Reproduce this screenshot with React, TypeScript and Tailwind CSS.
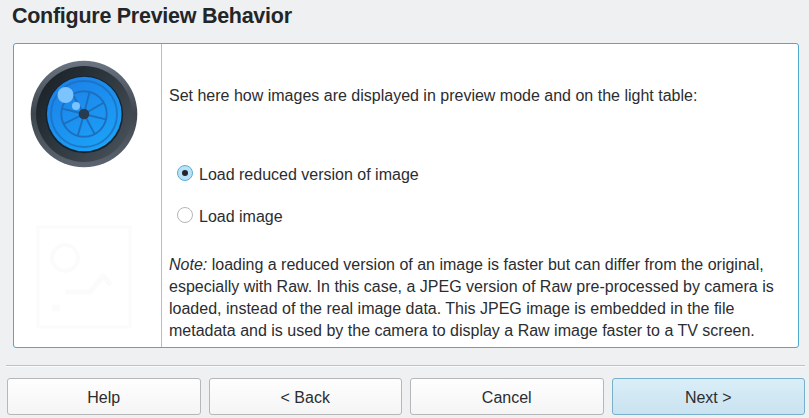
import React from "react";

function Lens() {
  return (
    <svg width="108" height="108" viewBox="0 0 108 108" className="block">
      <defs>
        <linearGradient id="rim" x1="0" y1="0" x2="0" y2="1">
          <stop offset="0" stopColor="#6b7583" />
          <stop offset="0.5" stopColor="#3f464e" />
          <stop offset="1" stopColor="#5c6570" />
        </linearGradient>
        <linearGradient id="barrel" x1="0" y1="0.1" x2="1" y2="0.9">
          <stop offset="0.1" stopColor="#1d252b" />
          <stop offset="0.5" stopColor="#303840" />
          <stop offset="1" stopColor="#4a525b" />
        </linearGradient>
        <linearGradient id="glass" x1="0.2" y1="0" x2="0.8" y2="1">
          <stop offset="0" stopColor="#1c7fe8" />
          <stop offset="1" stopColor="#1ba4f8" />
        </linearGradient>
      </defs>
      <circle cx="54" cy="54" r="53.3" fill="url(#rim)" />
      <circle cx="54" cy="54" r="48" fill="url(#barrel)" />
      <circle cx="54.3" cy="54.5" r="38.8" fill="#14242f" />
      <circle cx="54.3" cy="54" r="37.3" fill="url(#glass)" />
      <g fill="none" stroke="#1d6fbe" strokeWidth="1.9">
        <circle cx="54" cy="54" r="33" strokeOpacity="0.8" />
        <circle cx="54" cy="54" r="22.7" />
        {[14, 60, 104, 152, 196, 244, 284, 330].map((a) => (
          <path key={a} d="M54 50V31.5" transform={`rotate(${a} 54 54)`} />
        ))}
      </g>
      <circle cx="54" cy="54" r="5.3" fill="#263c52" />
      <circle cx="35.5" cy="35" r="8" fill="#7cc4ff" />
      <circle cx="46" cy="46" r="4" fill="#7cc4ff" />
    </svg>
  );
}

function FaintPicture() {
  return (
    <svg width="97" height="106" viewBox="0 0 97 106" fill="none" stroke="#fbfbfb" className="mt-[57px] ml-[6px] block">
      <path d="M2 2H94V102H2Z" strokeWidth="3" />
      <circle cx="29" cy="33" r="13" strokeWidth="4" />
      <path d="M29 67H54L67 51L75 60" strokeWidth="5" />
      <path d="M16 83H24" strokeWidth="7" />
    </svg>
  );
}

function Radio({ label, checked = false }: { label: string; checked?: boolean }) {
  return (
    <div className="flex h-[22px] items-center" role="radio" aria-checked={checked}>
      <span
        className={
          checked
            ? "mr-[6px] mb-1 flex size-4 items-center justify-center rounded-full border border-[#5aaed6] bg-[#b9e2f6]"
            : "mr-[6px] mb-1 flex size-4 items-center justify-center rounded-full border border-[#b4b6b8] bg-white"
        }
      >
        {checked && <span className="size-[6px] rounded-full bg-[#20262b]" />}
      </span>
      <span className="whitespace-nowrap">{label}</span>
    </div>
  );
}

function Button({ label, primary = false }: { label: string; primary?: boolean }) {
  return (
    <button
      className={
        primary
          ? "h-[37px] flex-1 rounded-[3px] border border-[#78afcb] bg-linear-to-b from-[#d9eef8] to-[#cae3f0] pt-0.5"
          : "h-[37px] flex-1 rounded-[3px] border border-[#b5b7b9] bg-linear-to-b from-[#fefefe] to-[#f5f5f6] pt-0.5"
      }
    >
      {label}
    </button>
  );
}

export default function App() {
  return (
    <div className="flex h-[418px] w-[809px] flex-col overflow-hidden bg-[#eff0f1] font-['Liberation_Sans',Arial,sans-serif] text-[16px] leading-[22px] text-[#2b2d30]">
      <h1 className="ml-3 h-[43px] pt-1 text-[21.5px] leading-[25px] font-bold tracking-[-0.27px] text-[#232629]">
        Configure Preview Behavior
      </h1>
      <main className="ml-[13px] flex h-[305px] w-[786px] rounded-[3px] border border-[#4fa9cc] bg-white">
        <aside className="w-[148px] shrink-0 border-r border-[#bcbec0] pt-4 pl-4">
          <Lens />
          <FaintPicture />
        </aside>
        <section className="flex flex-col pt-[41px] pl-[7px]">
          <p className="whitespace-nowrap">
            Set here how images are displayed in preview mode and on the light table:
          </p>
          <div className="mt-[57px] ml-2 flex flex-col gap-5">
            <Radio label="Load reduced version of image" checked />
            <Radio label="Load image" />
          </div>
          <p className="mt-[26px] whitespace-nowrap">
            <i>Note:</i> loading a reduced version of an image is faster but can differ from the original,
            <br />
            especially with Raw. In this case, a JPEG version of Raw pre-processed by camera is
            <br />
            loaded, instead of the real image data. This JPEG image is embedded in the file
            <br />
            metadata and is used by the camera to display a Raw image faster to a TV screen.
          </p>
        </section>
      </main>
      <hr className="mt-[17px] mr-1 ml-1.5 h-0.5 border-t border-b border-t-[#bec0c2] border-b-[#fbfbfb]" />
      <footer className="mt-[11px] mr-1 ml-[7px] flex gap-2">
        <Button label="Help" />
        <Button label="< Back" />
        <Button label="Cancel" />
        <Button label="Next >" primary />
      </footer>
    </div>
  );
}
